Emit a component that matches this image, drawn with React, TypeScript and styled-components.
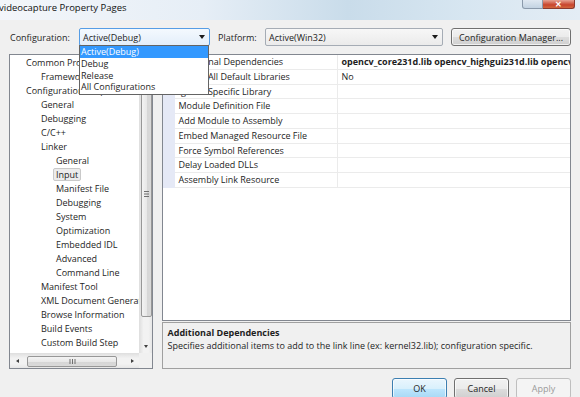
import React from "react";
import styled, { createGlobalStyle, css } from "styled-components";

const GlobalStyle = createGlobalStyle`
  html, body { margin: 0; padding: 0; width: 580px; height: 397px; overflow: hidden; background: #f0f0f0; }
  * { box-sizing: border-box; }
  body { font-family: "Open Sans", "Noto Sans", sans-serif; font-size: 9px; color: #1e1e1e; }
`;

const Window = styled.div`
  width: 580px;
  height: 397px;
  display: flex;
  flex-direction: column;
  background: #f0f0f0;
  overflow: hidden;
`;

const TitleBar = styled.div`
  height: 20px;
  flex: none;
  display: flex;
  align-items: flex-start;
  justify-content: space-between;
  background: linear-gradient(90deg, #f3f6fa 0%, #e6eef6 35%, #c9dcea 60%, #d7e6f1 80%, #e4edf5 100%);
  position: relative;
`;

const TitleText = styled.div`
  margin-left: -1px;
  padding-top: 2px;
  font-size: 9.5px;
  color: #111;
  line-height: 12px;
`;

const WindowButtons = styled.div`
  display: flex;
  margin-right: 5px;
`;

const MaxButton = styled.div`
  width: 21px;
  height: 9px;
  border: 1px solid #8b9aab;
  border-top: none;
  border-radius: 0 0 0 3px;
  background: linear-gradient(#dfe8f1, #c3d3e2);
`;

const CloseButton = styled.div`
  width: 32px;
  height: 9px;
  border: 1px solid #8a3a2f;
  border-top: none;
  border-left: none;
  border-radius: 0 0 3px 0;
  background: linear-gradient(#e6a293, #c8452d 60%, #d2663e);
  color: #fff;
  font-size: 8px;
  font-weight: bold;
  line-height: 8px;
  text-align: center;
`;

const Client = styled.div`
  flex: 1;
  display: flex;
  flex-direction: column;
  padding: 8px 9px 0 9px;
`;

const ConfigRow = styled.div`
  display: flex;
  align-items: center;
  height: 18px;
  flex: none;
`;

const Label = styled.div<{ $w: number; $ml?: number }>`
  width: ${(p) => p.$w}px;
  margin-left: ${(p) => p.$ml ?? 0}px;
  padding-left: 1px;
  white-space: nowrap;
`;

const ComboWrap = styled.div`
  position: relative;
`;

const Combo = styled.div<{ $w: number; $focused?: boolean }>`
  width: ${(p) => p.$w}px;
  height: 18px;
  display: flex;
  align-items: center;
  justify-content: space-between;
  padding: 0 4px 0 3px;
  border: 1px solid ${(p) => (p.$focused ? "#569de5" : "#a5acb5")};
  border-radius: 2px;
  background: ${(p) =>
    p.$focused ? "linear-gradient(#f4f9fe, #e3eefa)" : "linear-gradient(#f7f7f7, #ebebeb)"};
  white-space: nowrap;
`;

const DownArrow = styled.span`
  width: 0;
  height: 0;
  border-left: 3.5px solid transparent;
  border-right: 3.5px solid transparent;
  border-top: 4px solid #1b1b1b;
`;

const DropList = styled.div`
  position: absolute;
  left: 0;
  top: 17px;
  width: 130px;
  background: #fff;
  border: 1px solid #646464;
  z-index: 5;
  padding-bottom: 1px;
`;

const DropItem = styled.div<{ $active?: boolean }>`
  height: 11.8px;
  line-height: 11.8px;
  padding-left: 1px;
  white-space: nowrap;
  ${(p) =>
    p.$active &&
    css`
      background: #3399ff;
      color: #fff;
    `}
`;

const PushButton = styled.div<{ $w: number; $default?: boolean; $disabled?: boolean }>`
  width: ${(p) => p.$w}px;
  height: ${(p) => (p.$default !== undefined ? 21 : 18)}px;
  display: flex;
  align-items: center;
  justify-content: center;
  border: 1px solid ${(p) => (p.$default ? "#3c7fb1" : p.$disabled ? "#bfbfbf" : "#707070")};
  border-radius: 3px;
  background: ${(p) =>
    p.$default
      ? "linear-gradient(#eaf6fd, #d9f0fc 50%, #bee6fd 51%, #a7d9f5)"
      : p.$disabled
      ? "#f4f4f4"
      : "linear-gradient(#f2f2f2, #ebebeb 50%, #dddddd 51%, #cfcfcf)"};
  color: ${(p) => (p.$disabled ? "#9a9a9a" : "#1e1e1e")};
  box-shadow: ${(p) => (p.$disabled ? "none" : "inset 0 0 0 1px rgba(255,255,255,0.7)")};
  white-space: nowrap;
`;

const Main = styled.div`
  display: flex;
  gap: 9px;
  margin-top: 8px;
  height: 315px;
  flex: none;
`;

const TreePanel = styled.div`
  width: 145px;
  border: 1px solid #828790;
  background: #fff;
  display: grid;
  grid-template-columns: 1fr 13px;
  grid-template-rows: 1fr 15px;
  overflow: hidden;
`;

const TreeList = styled.div`
  overflow: hidden;
  position: relative;
`;

const TreeRow = styled.div<{ $level: number }>`
  height: 14px;
  display: flex;
  align-items: center;
  padding-left: ${(p) => 15 + p.$level * 15}px;
  white-space: nowrap;
`;

const TreeText = styled.span<{ $selected?: boolean }>`
  padding: 0 2px;
  margin-left: -2px;
  line-height: 11px;
  border: 1px solid ${(p) => (p.$selected ? "#c9c9c9" : "transparent")};
  border-radius: 2px;
  background: ${(p) => (p.$selected ? "#ececec" : "transparent")};
`;

const VScroll = styled.div`
  display: flex;
  flex-direction: column;
  background: linear-gradient(90deg, #e2e2e2, #f2f2f2 30%, #f2f2f2 70%, #e6e6e6);
  border-left: 1px solid #e0e0e0;
`;

const HScroll = styled.div`
  display: flex;
  align-items: center;
  background: linear-gradient(#e2e2e2, #f2f2f2 30%, #f2f2f2 70%, #e6e6e6);
  border-top: 1px solid #e0e0e0;
`;

const Corner = styled.div`
  background: #f0f0f0;
`;

const ArrowBox = styled.div<{ $len: number; $horizontal?: boolean }>`
  flex: none;
  ${(p) => (p.$horizontal ? `width: ${p.$len}px; height: 100%;` : `height: ${p.$len}px; width: 100%;`)}
  display: flex;
  align-items: center;
  justify-content: center;
`;

const Tri = styled.span<{ $dir: "up" | "down" | "left" | "right" }>`
  width: 0;
  height: 0;
  ${(p) =>
    p.$dir === "down"
      ? "border-left: 2.5px solid transparent; border-right: 2.5px solid transparent; border-top: 3px solid #404040;"
      : p.$dir === "up"
      ? "border-left: 2.5px solid transparent; border-right: 2.5px solid transparent; border-bottom: 3px solid #404040;"
      : p.$dir === "left"
      ? "border-top: 2.5px solid transparent; border-bottom: 2.5px solid transparent; border-right: 3px solid #404040;"
      : "border-top: 2.5px solid transparent; border-bottom: 2.5px solid transparent; border-left: 3px solid #404040;"}
`;

const Thumb = styled.div<{ $horizontal?: boolean; $len: number; $offset: number }>`
  flex: none;
  border: 1px solid #979797;
  border-radius: 2px;
  display: flex;
  align-items: center;
  justify-content: center;
  ${(p) =>
    p.$horizontal
      ? css`
          width: ${p.$len}px;
          height: 11px;
          margin-left: ${p.$offset}px;
          background: linear-gradient(#f3f3f3, #e8e8e8 50%, #d6d6d6 51%, #d9d9d9);
        `
      : css`
          height: ${p.$len}px;
          width: 11px;
          margin: ${p.$offset}px 0 0 1px;
          background: linear-gradient(90deg, #f3f3f3, #e8e8e8 50%, #d6d6d6 51%, #d9d9d9);
        `}
`;

const Spacer = styled.div`
  flex: 1;
`;

const RightColumn = styled.div`
  width: 410px;
  display: flex;
  flex-direction: column;
  gap: 1px;
`;

const Grid = styled.div`
  height: 267px;
  border: 1px solid #828790;
  background: #fff;
  overflow: hidden;
`;

const GridRow = styled.div`
  height: 14.75px;
  display: grid;
  grid-template-columns: 12px 163px 1fr;
`;

const Gutter = styled.div`
  background: #e5e9f6;
`;

const NameCell = styled.div`
  border-right: 1px solid #ebebeb;
  border-bottom: 1px solid #ebebeb;
  padding-left: 3px;
  line-height: 13.75px;
  white-space: nowrap;
  overflow: hidden;
`;

const ValueCell = styled.div<{ $bold?: boolean }>`
  border-bottom: 1px solid #ebebeb;
  padding-left: 3px;
  line-height: 13.75px;
  white-space: nowrap;
  overflow: hidden;
  font-weight: ${(p) => (p.$bold ? 700 : 400)};
`;

const Description = styled.div`
  flex: 1;
  border: 1px solid #a0a0a0;
  background: #f0f0f0;
  padding: 3px 4px;
`;

const DescTitle = styled.div`
  font-weight: 700;
  line-height: 13px;
`;

const DescText = styled.div`
  line-height: 14px;
  white-space: nowrap;
`;

const ButtonRow = styled.div`
  display: flex;
  justify-content: flex-end;
  gap: 7px;
  margin-top: 9px;
`;

const Grip = ({ horizontal }: { horizontal?: boolean }) =>
  horizontal ? (
    <svg width="7" height="5" viewBox="0 0 7 5">
      <path d="M1 0v5M3.5 0v5M6 0v5" stroke="#6e6e6e" strokeWidth="1" />
    </svg>
  ) : (
    <svg width="5" height="6" viewBox="0 0 5 6">
      <path d="M0 0.5h5M0 3h5M0 5.5h5" stroke="#6e6e6e" strokeWidth="1" />
    </svg>
  );

const treeItems: { label: string; level: number; selected?: boolean }[] = [
  { label: "Common Properties", level: 0 },
  { label: "Framework and References", level: 1 },
  { label: "Configuration Properties", level: 0 },
  { label: "General", level: 1 },
  { label: "Debugging", level: 1 },
  { label: "C/C++", level: 1 },
  { label: "Linker", level: 1 },
  { label: "General", level: 2 },
  { label: "Input", level: 2, selected: true },
  { label: "Manifest File", level: 2 },
  { label: "Debugging", level: 2 },
  { label: "System", level: 2 },
  { label: "Optimization", level: 2 },
  { label: "Embedded IDL", level: 2 },
  { label: "Advanced", level: 2 },
  { label: "Command Line", level: 2 },
  { label: "Manifest Tool", level: 1 },
  { label: "XML Document Generator", level: 1 },
  { label: "Browse Information", level: 1 },
  { label: "Build Events", level: 1 },
  { label: "Custom Build Step", level: 1 },
  { label: "Code Analysis", level: 1 },
];

const properties: { name: string; value?: string; bold?: boolean }[] = [
  { name: "Additional Dependencies", value: "opencv_core231d.lib opencv_highgui231d.lib opencv_imgproc231d.lib", bold: true },
  { name: "Ignore All Default Libraries", value: "No" },
  { name: "Ignore Specific Library" },
  { name: "Module Definition File" },
  { name: "Add Module to Assembly" },
  { name: "Embed Managed Resource File" },
  { name: "Force Symbol References" },
  { name: "Delay Loaded DLLs" },
  { name: "Assembly Link Resource" },
];

const configs = ["Active(Debug)", "Debug", "Release", "All Configurations"];

export default function App() {
  return (
    <>
      <GlobalStyle />
      <Window>
        <TitleBar>
          <TitleText>videocapture Property Pages</TitleText>
          <WindowButtons>
            <MaxButton />
            <CloseButton>✕</CloseButton>
          </WindowButtons>
        </TitleBar>
        <Client>
          <ConfigRow>
            <Label $w={70}>Configuration:</Label>
            <ComboWrap>
              <Combo $w={131} $focused>
                <span>Active(Debug)</span>
                <DownArrow />
              </Combo>
              <DropList>
                {configs.map((c, i) => (
                  <DropItem key={c} $active={i === 0}>
                    {c}
                  </DropItem>
                ))}
              </DropList>
            </ComboWrap>
            <Label $w={48} $ml={7}>Platform:</Label>
            <Combo $w={178}>
              <span>Active(Win32)</span>
              <DownArrow />
            </Combo>
            <Spacer />
            <PushButton $w={120}>Configuration Manager...</PushButton>
          </ConfigRow>
          <Main>
            <TreePanel>
              <TreeList>
                {treeItems.map((t, i) => (
                  <TreeRow key={i} $level={t.level}>
                    <TreeText $selected={t.selected}>{t.label}</TreeText>
                  </TreeRow>
                ))}
              </TreeList>
              <VScroll>
                <ArrowBox $len={13}>
                  <Tri $dir="up" />
                </ArrowBox>
                <Thumb $len={247} $offset={2}>
                  <Grip />
                </Thumb>
                <Spacer />
                <ArrowBox $len={14}>
                  <Tri $dir="down" />
                </ArrowBox>
              </VScroll>
              <HScroll>
                <ArrowBox $len={14} $horizontal>
                  <Tri $dir="left" />
                </ArrowBox>
                <Thumb $horizontal $len={90} $offset={3}>
                  <Grip horizontal />
                </Thumb>
                <Spacer />
                <ArrowBox $len={14} $horizontal>
                  <Tri $dir="right" />
                </ArrowBox>
              </HScroll>
              <Corner />
            </TreePanel>
            <RightColumn>
              <Grid>
                {properties.map((p) => (
                  <GridRow key={p.name}>
                    <Gutter />
                    <NameCell>{p.name}</NameCell>
                    <ValueCell $bold={p.bold}>{p.value ?? ""}</ValueCell>
                  </GridRow>
                ))}
              </Grid>
              <Description>
                <DescTitle>Additional Dependencies</DescTitle>
                <DescText>
                  Specifies additional items to add to the link line (ex: kernel32.lib); configuration specific.
                </DescText>
              </Description>
            </RightColumn>
          </Main>
          <ButtonRow>
            <PushButton $w={55} $default>OK</PushButton>
            <PushButton $w={55} $default={false}>Cancel</PushButton>
            <PushButton $w={55} $default={false} $disabled>Apply</PushButton>
          </ButtonRow>
        </Client>
      </Window>
    </>
  );
}
